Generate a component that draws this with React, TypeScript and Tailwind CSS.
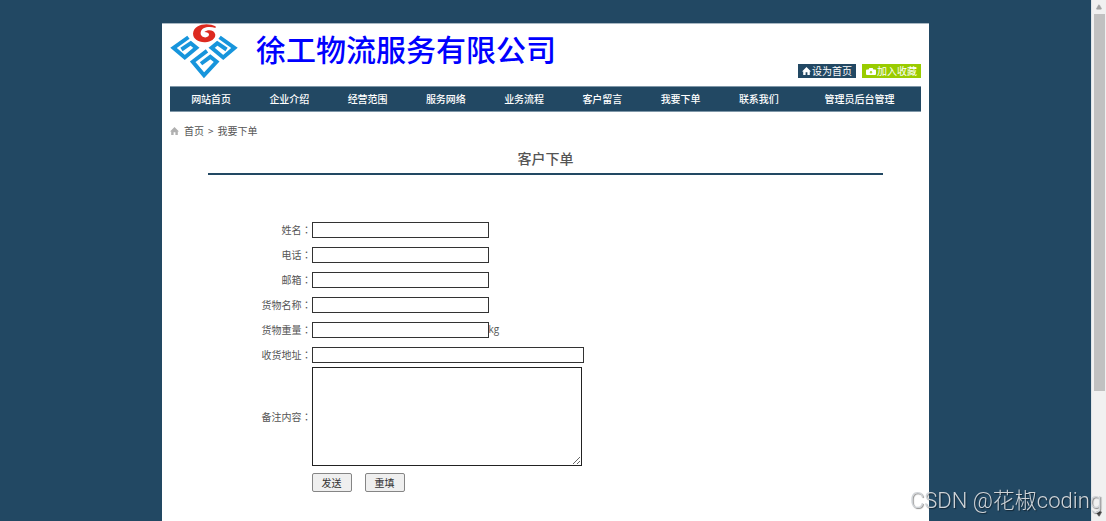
import { Triangle } from 'lucide-react';

const navItems = ['网站首页', '企业介绍', '经营范围', '服务网络', '业务流程', '客户留言', '我要下单', '联系我们', '管理员后台管理'];

const fields = [
  { id: 'name', label: '姓名', type: 'text' },
  { id: 'phone', label: '电话', type: 'tel' },
  { id: 'email', label: '邮箱', type: 'email' },
  { id: 'goods', label: '货物名称', type: 'text' },
  { id: 'weight', label: '货物重量', type: 'text', unit: 'kg' },
  { id: 'address', label: '收货地址', type: 'text', wide: true },
];

function Logo() {
  return (
    <svg viewBox="6 10 204 166" className="h-[55px] w-[68px] shrink-0" aria-hidden="true">
      <path
        d="M143 17C120 4 77 10 75 38C74 54 90 66 112 65C130 64 143 54 142 42C140 28 120 25 109 34C120 34 127 40 121 47C112 55 96 48 98 36C100 20 122 16 143 22Z"
        fill="#dd2a1f"
      />
      <g fill="none" stroke="#1795dc" strokeWidth="12">
        <path d="M61 50L16 82L50 111L85 82L68 68L40 87" />
        <path d="M155 50L200 82L166 111L131 82L148 68L176 87" />
        <path d="M117 91L74 124L108 165L146 124L127 109L99 130" />
      </g>
    </svg>
  );
}

function HomeIcon() {
  return (
    <svg viewBox="0 0 9 8" className="h-2 w-[9px]" fill="currentColor" aria-hidden="true">
      <path d="M4.5 0L9 4.4H7.8V8H5.4V5.2H3.6V8H1.2V4.4H0Z" />
    </svg>
  );
}

function CameraIcon() {
  return (
    <svg viewBox="0 0 10 7" className="h-[7px] w-[10px]" fill="currentColor" fillRule="evenodd" aria-hidden="true">
      <path d="M1 1.5H2.6L3.4 0H6.6L7.4 1.5H9Q10 1.5 10 2.5V6Q10 7 9 7H1Q0 7 0 6V2.5Q0 1.5 1 1.5ZM5 2.8L3.4 4.4H4.4V5.6H5.6V4.4H6.6Z" />
    </svg>
  );
}

function Label({ id, text }: { id: string; text: string }) {
  return (
    <label htmlFor={id} className="w-[104px] shrink-0 text-right">
      {text}
      <span lang="zh-TW" className="font-['Noto_Sans_CJK_TC',sans-serif]">{'\uFF1A'}</span>
    </label>
  );
}

function Header() {
  return (
    <header>
      <div className="flex h-[62px] items-start justify-between">
        <div className="flex items-start">
          <Logo />
          <span className="ml-[18px] text-[30px] leading-[48px] font-medium text-[#0000ff]">徐工物流服务有限公司</span>
        </div>
        <div className="mt-10 flex gap-[6px] text-[10px] leading-[14px] text-white">
          <a href="#" className="flex items-center gap-px bg-[#224863] px-1">
            <HomeIcon />
            设为首页
          </a>
          <a href="#" className="flex items-center gap-px bg-[#99cc00] px-1">
            <CameraIcon />
            加入收藏
          </a>
        </div>
      </div>
      <nav className="grid grid-cols-[repeat(8,1fr)_123px] border-y border-[#7f97a8] bg-[#224863] pl-[2px] text-center text-[10px] leading-6 font-medium text-white">
        {navItems.map((item) => (
          <a key={item} href="#">{item}</a>
        ))}
      </nav>
    </header>
  );
}

function OrderForm() {
  return (
    <form className="mt-[42px]">
      {fields.map((field) => (
        <div key={field.id} className="flex h-[25px] items-center">
          <Label id={field.id} text={field.label} />
          <input
            id={field.id}
            type={field.type}
            className={`h-[16px] border border-[#333] bg-white px-px ${field.wide ? 'w-[272px]' : 'w-[177px]'}`}
          />
          {field.unit && <span className="font-['Open_Sans',sans-serif]">{field.unit}</span>}
        </div>
      ))}
      <div className="flex items-center">
        <Label id="remark" text="备注内容" />
        <textarea id="remark" className="block h-[99px] w-[270px] border border-[#222] bg-white" />
      </div>
      <div className="mt-[7px] ml-[104px] flex gap-[13px] text-[#333]">
        <button type="submit" className="h-[19px] w-10 rounded-xs border border-[#858585] bg-[#efefef]">发送</button>
        <button type="reset" className="h-[19px] w-10 rounded-xs border border-[#858585] bg-[#efefef]">重填</button>
      </div>
    </form>
  );
}

function Scrollbar() {
  return (
    <div className="flex w-[15px] shrink-0 flex-col items-center border-l border-[#dfe5e8] bg-[#f1f1f1]" aria-hidden="true">
      <div className="flex h-[14px] items-center">
        <Triangle size={6} fill="#a3a3a3" stroke="#a3a3a3" />
      </div>
      <div className="w-[11px] grow-13 bg-[#c1c1c1]" />
      <div className="grow-4" />
      <div className="flex h-[14px] items-center">
        <Triangle size={6} fill="#505050" stroke="#505050" className="rotate-180" />
      </div>
    </div>
  );
}

export default function App() {
  return (
    <div className="flex min-h-screen bg-[#224863] font-['Noto_Sans_CJK_SC',sans-serif] text-[10px] text-[#555]">
      <div className="flex grow justify-center pt-[23px]">
        <main className="w-full max-w-[767px] border-t border-[#a9b8c3] bg-white px-2">
          <Header />
          <div className="mt-[11px] flex items-center text-[10px] leading-4">
            <span className="text-[#b0b0b0]">
              <HomeIcon />
            </span>
            <a href="#" className="ml-[5px]">首页</a>
            <span className="mx-1">&gt;</span>
            <span>我要下单</span>
          </div>
          <section className="mx-auto w-[90%]">
            <h1 className="mt-[7px] border-b-2 border-[#224863] pb-[3px] text-center text-[14px] leading-6 font-medium">客户下单</h1>
            <OrderForm />
          </section>
        </main>
      </div>
      <Scrollbar />
      <div className="pointer-events-none fixed right-1 bottom-1 font-['Roboto','Noto_Sans_CJK_SC',sans-serif] text-[22px] leading-8 font-light text-[#d0d4d8] [text-shadow:1px_1px_1px_#0007]">
        CSDN @花椒coding
      </div>
    </div>
  );
}
